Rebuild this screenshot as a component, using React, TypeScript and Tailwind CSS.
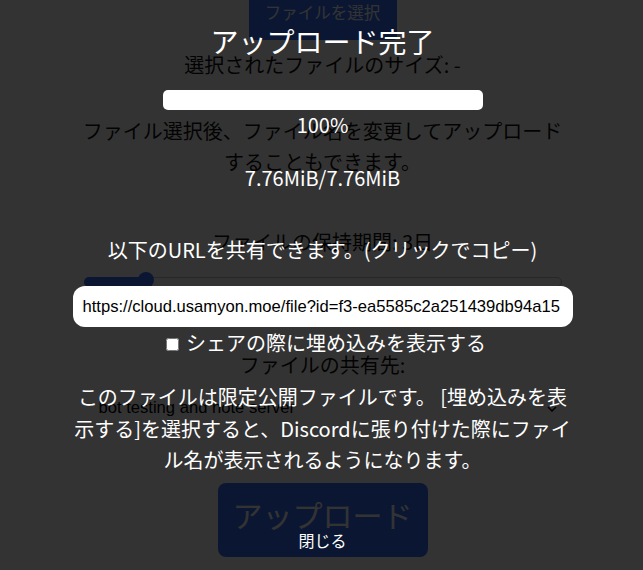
import React from "react";

const cjk = "font-['Noto_Sans_CJK_JP',sans-serif]";
const arial = "font-['Liberation_Sans',Arial,sans-serif]";

export default function App() {
  return (
    <div className={`relative h-[570px] overflow-hidden bg-white ${cjk}`}>
      {/* underlying page */}
      <div className="flex justify-center pl-[2px]">
        <div className="flex w-[480px] flex-col items-center text-center text-[20px] leading-[31.5px] text-[#111]">
          <button className="-mt-[14px] flex h-[54px] w-[148px] items-center justify-center rounded-[4px] bg-[#3470fa] text-[16.5px] text-white">
            ファイルを選択
          </button>
          <p className="mt-[8.5px]">選択されたファイルのサイズ: -</p>
          <p className="mt-[34.5px]">
            ファイル選択後、ファイル名を変更してアップロードすることもできます。
          </p>
          <p className="mt-[48.5px]">ファイルの保持期間: 3日</p>
          <div className="relative mt-[14.5px] h-[16px] w-[478px]">
            <div className="absolute left-0 right-0 top-[5px] h-[10px] rounded-full border border-[#c0c0c0] bg-white" />
            <div className="absolute left-0 top-[5px] h-[10px] w-[62px] rounded-l-full bg-[#3470fa]" />
            <div className="absolute left-[54px] top-0 h-[16px] w-[16px] rounded-full bg-[#3470fa]" />
          </div>
          <p className="mt-[61px]">ファイルの共有先:</p>
          <div
            className={`mt-[8.25px] flex h-[40px] w-full items-center justify-between pl-[16px] pr-[6px] ${arial} text-[16.6px] leading-normal text-black`}
          >
            <span>bot testing and note server</span>
            <svg width="10" height="6" viewBox="0 0 10 6" fill="none">
              <path d="M1 1l4 4 4-4" stroke="#000" strokeWidth="1.5" />
            </svg>
          </div>
          <button className="mt-[54px] flex h-[74px] w-[210px] items-center justify-center rounded-[8px] bg-[#3470fa] pb-[10px] text-[30px] text-white">
            アップロード
          </button>
        </div>
      </div>

      {/* overlay / modal */}
      <div className="absolute inset-0 flex flex-col items-center bg-black/80 pl-[2px] pt-[21px] text-center text-white">
        <h2 className="text-[28px] font-normal leading-[40px]">アップロード完了</h2>
        <div className="mt-[29px] h-[20px] w-[320px] rounded-[5px] bg-white" />
        <p className="text-[20px] leading-[30px]">100%</p>
        <p className="mt-[23px] text-[20px] leading-[30px]">7.76MiB/7.76MiB</p>
        <p className="mt-[42px] text-[20px] leading-[30px]">
          以下のURLを共有できます。(クリックでコピー)
        </p>
        <input
          readOnly
          value="https://cloud.usamyon.moe/file?id=f3-ea5585c2a251439db94a15"
          className={`mt-[21px] h-[41px] w-[500px] rounded-[12px] border-0 bg-white px-[10px] ${arial} text-[16.6px] text-black outline-none`}
        />
        <label className="mt-[1px] flex items-center pl-[7px] text-[20px] leading-[30px]">
          <input type="checkbox" className="m-0 mr-[7px] mt-[2px] h-[13px] w-[13px]" />
          シェアの際に埋め込みを表示する
        </label>
        <p className="mt-[23px] w-[500px] text-[20px] leading-[31.5px]">
          このファイルは限定公開ファイルです。 [埋め込みを表示する]を選択すると、Discordに張り付けた際にファイル名が表示されるようになります。
        </p>
        <button className="mt-[52.5px] text-[16px] leading-[24px]">閉じる</button>
      </div>
    </div>
  );
}
